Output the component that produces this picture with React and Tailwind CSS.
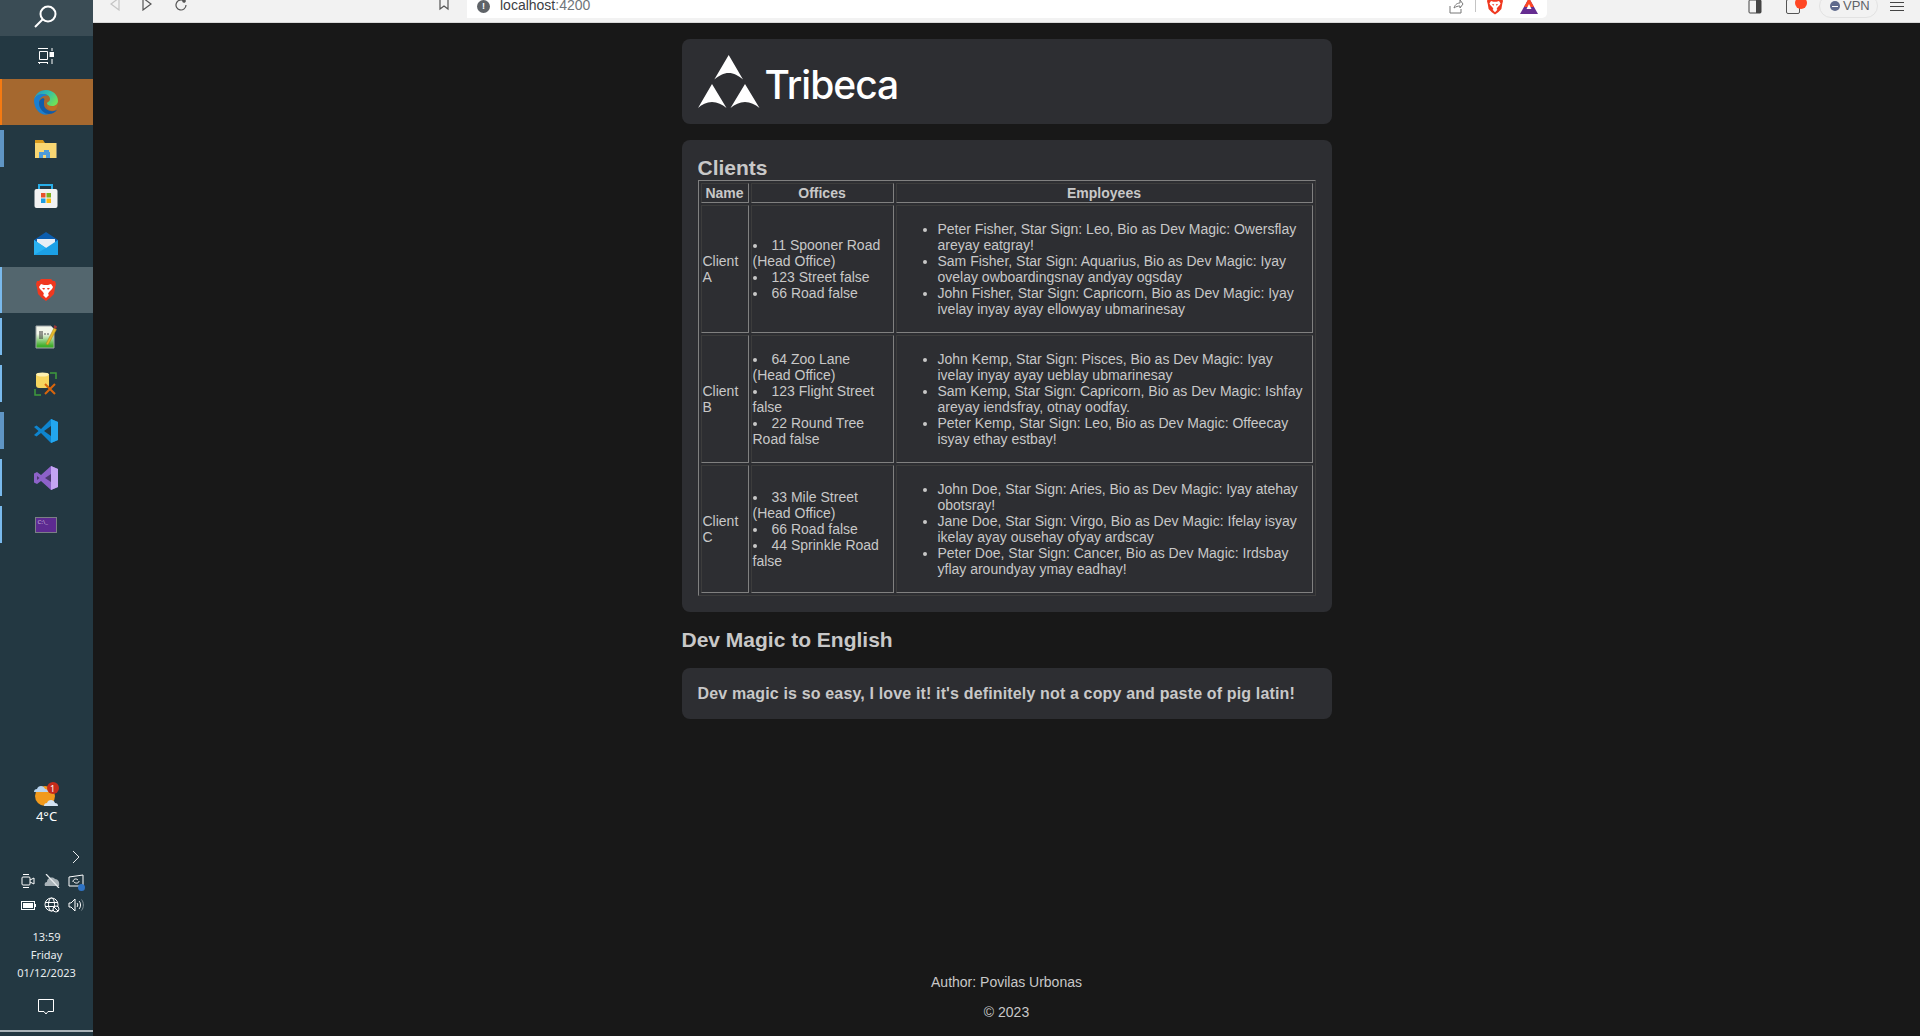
import React from "react";

const clients = [
  {
    name: "Client A",
    offices: ["11 Spooner Road (Head Office)", "123 Street false", "66 Road false"],
    employees: [
      "Peter Fisher, Star Sign: Leo, Bio as Dev Magic: Owersflay areyay eatgray!",
      "Sam Fisher, Star Sign: Aquarius, Bio as Dev Magic: Iyay ovelay owboardingsnay andyay ogsday",
      "John Fisher, Star Sign: Capricorn, Bio as Dev Magic: Iyay ivelay inyay ayay ellowyay ubmarinesay",
    ],
  },
  {
    name: "Client B",
    offices: ["64 Zoo Lane (Head Office)", "123 Flight Street false", "22 Round Tree Road false"],
    employees: [
      "John Kemp, Star Sign: Pisces, Bio as Dev Magic: Iyay ivelay inyay ayay ueblay ubmarinesay",
      "Sam Kemp, Star Sign: Capricorn, Bio as Dev Magic: Ishfay areyay iendsfray, otnay oodfay.",
      "Peter Kemp, Star Sign: Leo, Bio as Dev Magic: Offeecay isyay ethay estbay!",
    ],
  },
  {
    name: "Client C",
    offices: ["33 Mile Street (Head Office)", "66 Road false", "44 Sprinkle Road false"],
    employees: [
      "John Doe, Star Sign: Aries, Bio as Dev Magic: Iyay atehay obotsray!",
      "Jane Doe, Star Sign: Virgo, Bio as Dev Magic: Ifelay isyay ikelay ayay ousehay ofyay ardscay",
      "Peter Doe, Star Sign: Cancer, Bio as Dev Magic: Irdsbay yflay aroundyay ymay eadhay!",
    ],
  },
];

const cellBorder = "border border-t-[#3c3c3c] border-l-[#3c3c3c] border-r-[#808080] border-b-[#808080] p-px";

function Edge() {
  return (
    <svg width="24" height="25" viewBox="0 0 24 25">
      <defs>
        <linearGradient id="edgeTop" x1="0" y1="0" x2="1" y2="0.6">
          <stop offset="0" stopColor="#1c8fd0" />
          <stop offset="0.55" stopColor="#35c1a5" />
          <stop offset="1" stopColor="#6ee05a" />
        </linearGradient>
      </defs>
      <path d="M12 0C19 0 24 5 24 11c0 3-2.500 5-6 5-3 0-5-1-5-2.500 0-2 3-1.500 3-4.500 0-3-3-5-7-5C5 4 1.500 6 0 10 1 4 6 0 12 0z" fill="url(#edgeTop)" />
      <path d="M0 10c1-4 5-6 9-6 2 0 3.500 .6 5 1.600C9 5 5 8 5 13c0 5 4 10 10 11-1.200 .5-2 .7-3 .7C5 24.700 0 18 0 10z" fill="#1a7fd0" />
      <path d="M9 8c-3 1-4 3-4 5 0 6 5 11 10 11 3 0 6-1.500 8-4-2 1-4 1.500-6 1-4-.5-7-3-7-7 0-2 0-4 .5-5z" fill="#0f5cab" />
      <path d="M13 13.500c0 2 2.500 3 5 3 2.500 0 4.500-1 6-3-.5 3-1.500 5-3 6.500-2 .8-4.500 .5-6-.5-2-1.500-2.500-4-2-6z" fill="#c8701f" opacity="0.7" />
    </svg>
  );
}

function Folder() {
  return (
    <svg width="22" height="18" viewBox="0 0 22 18">
      <path d="M0 0h8l2 3h12v15H0z" fill="#d99a1c" />
      <rect x="0" y="3" width="22" height="15" fill="#f8d672" />
      <rect x="21" y="3" width="1" height="15" fill="#8f8a6a" />
      <path d="M4 18v-6h5v-2h5v2h1v6h-4v-3H8v3z" fill="#4d9ad8" />
    </svg>
  );
}

function Store() {
  return (
    <svg width="24" height="24" viewBox="0 0 24 24">
      <path d="M5 5V1h13v4" fill="none" stroke="#28aee8" strokeWidth="2" />
      <rect x="0.500" y="5" width="23" height="19" rx="2" fill="#f2f2f2" />
      <rect x="7" y="9" width="4.500" height="4.500" fill="#e8512c" />
      <rect x="12.500" y="9" width="4.500" height="4.500" fill="#7fb01f" />
      <rect x="7" y="14.500" width="4.500" height="4.500" fill="#1d9ce0" />
      <rect x="12.500" y="14.500" width="4.500" height="4.500" fill="#fab90c" />
    </svg>
  );
}

function Mail() {
  return (
    <svg width="24" height="23" viewBox="0 0 24 23">
      <path d="M0 8 12 0l12 8v2H0z" fill="#0b5dae" />
      <path d="M3 7h18v6l-9 4-9-4z" fill="#e8eef4" />
      <path d="M0 8l12 8 12-8v15H0z" fill="#1ba0e6" />
      <path d="M0 8l12 8-12 7z" fill="#29b2f2" />
    </svg>
  );
}

function BraveLion({ size = 20 }) {
  return (
    <svg width={size} height={size * 1.1} viewBox="0 0 20 22">
      <path d="M5 0h10l2 2 2 0 1 3-1 4-1 6-4 4-4 3-4-3-4-4-1-6-1-4 1-3 2 0z" fill="#f0381f" />
      <path d="M5 5l3 1h4l3-1 2 3-1 2-3 3-1 2 1 1-3 3-3-3 1-1-1-2-3-3-1-2z" fill="#fff" />
      <path d="M6 9h3l-1 2zM14 9h-3l1 2z" fill="#f0381f" />
    </svg>
  );
}

function Notepad() {
  return (
    <svg width="22" height="25" viewBox="0 0 22 25">
      <defs>
        <linearGradient id="padFill" x1="0" y1="0" x2="0" y2="1">
          <stop offset="0.35" stopColor="#f2f6ea" />
          <stop offset="0.9" stopColor="#3fae2a" />
        </linearGradient>
      </defs>
      <path d="M1 2h15l3 3v19H1z" fill="url(#padFill)" stroke="#a0a6a8" />
      <path d="M5 7v8M7 7v8" stroke="#333" strokeWidth="1" />
      <path d="M9 10h2M12 10h2" stroke="#555" strokeWidth="1" />
      <path d="M11 20 19 4l2.500 1.500L13 21z" fill="#e3b72c" stroke="#a57f14" strokeWidth="0.500" />
      <path d="M19.500 1l2.500 1.500-1 2.500-2.500-1.500z" fill="#a03838" />
    </svg>
  );
}

function DbTool() {
  return (
    <svg width="24" height="24" viewBox="0 0 24 24">
      <path d="M16 1h6v6M1 17v6h6" fill="none" stroke="#3f9a3c" strokeWidth="1.500" />
      <rect x="2" y="1" width="13" height="15" rx="3" fill="#f6d55f" />
      <ellipse cx="8.500" cy="2.500" rx="6.500" ry="2" fill="#fdf0b0" />
      <path d="M11 12l10 10M21 12 11 22" stroke="#d8650c" strokeWidth="2" />
    </svg>
  );
}

function VsCode() {
  return (
    <svg width="24" height="24" viewBox="0 0 24 24">
      <path d="M17 0 7 10 2.500 6.500 0 8l4.500 4L0 16l2.500 1.500L7 14l10 10 7-3V3z" fill="#0e85cf" />
      <path d="M17 0l7 3v18l-7 3z" fill="#23a6ee" />
      <path d="M17 7 10 12l7 5z" fill="#233842" />
    </svg>
  );
}

function VisualStudio() {
  return (
    <svg width="24" height="24" viewBox="0 0 24 24">
      <path d="M17 0 7 9 3 6 0 7.500v9L3 18l4-3 10 9 7-3V3z" fill="#8d62c9" />
      <path d="M17 0l7 3v18l-7 3z" fill="#c4a4f2" />
      <path d="M17 8 11 12l6 4zM3 10l2.500 2L3 14z" fill="#4a3a6e" />
    </svg>
  );
}

function Cmd() {
  return (
    <div className="flex h-[16px] w-[22px] border border-[#7b7f86] bg-[#5d2a91] pl-[2px] text-[6px] leading-[9px] text-[#c9b8de]">C:\_</div>
  );
}

function SidebarRow({ height, strip, children }) {
  return (
    <div className={"relative flex items-center justify-center pr-[2px] " + height}>
      {strip}
      {children}
    </div>
  );
}

const thinStrip = <span className="absolute left-0 top-[5px] bottom-[5px] w-[2px] bg-[#79b9ec]" />;
const wideStrip = <span className="absolute left-0 top-[5px] bottom-[5px] w-[4px] bg-[#5f95c4]" />;

function Sidebar() {
  return (
    <aside className="flex h-full w-[93px] shrink-0 flex-col bg-[#233842] font-['Noto_Sans',sans-serif] text-white">
      <div className="flex h-[36px] items-center justify-center bg-[#3a4c55] pb-[2px] pr-[2px]">
        <svg width="24" height="24" viewBox="0 0 24 24" fill="none" stroke="#fff" strokeWidth="2">
          <circle cx="14" cy="9" r="7.500" />
          <path d="M8.500 14.500 1 22" />
        </svg>
      </div>
      <div className="flex h-[43px] items-center justify-center pb-[4px] pr-[2px]">
        <svg width="16" height="16" viewBox="0 0 16 16" fill="none" stroke="#fff" strokeWidth="1">
          <path d="M0 .500h10M1.500 3.500h8v8h-8zM0 14.500h10M1.500 14v2M9.500 14v2" />
          <path d="M14 0v3M14 11v5" />
          <rect x="12" y="4.500" width="4" height="4" fill="#fff" />
        </svg>
      </div>
      <SidebarRow height="h-[46px] bg-[#a5682f]" strip={<span className="absolute inset-y-0 left-0 w-[2px] bg-[#f47a12]" />}><Edge /></SidebarRow>
      <SidebarRow height="h-[47px]" strip={wideStrip}><Folder /></SidebarRow>
      <SidebarRow height="h-[48px]"><Store /></SidebarRow>
      <SidebarRow height="h-[47px]"><Mail /></SidebarRow>
      <SidebarRow height="h-[46px] bg-[#53666e]" strip={<span className="absolute inset-y-0 left-0 w-[2px] bg-[#79b9ec]" />}><BraveLion /></SidebarRow>
      <SidebarRow height="h-[47px]" strip={thinStrip}><Notepad /></SidebarRow>
      <SidebarRow height="h-[47px]" strip={thinStrip}><DbTool /></SidebarRow>
      <SidebarRow height="h-[47px]" strip={wideStrip}><VsCode /></SidebarRow>
      <SidebarRow height="h-[47px]" strip={thinStrip}><VisualStudio /></SidebarRow>
      <SidebarRow height="h-[47px]" strip={thinStrip}><Cmd /></SidebarRow>

      <div className="mt-auto flex flex-col items-center pb-[4px]">
        <div className="relative h-[24px] w-[24px] -translate-x-px">
          <svg width="24" height="24" viewBox="0 0 24 24">
            <circle cx="11" cy="13" r="10" fill="#f19a1d" />
            <path d="M0 9c0-2 1-3 3-3 1-4 7-4 8 0 2 0 3 1 3 3z" fill="#b7d3ee" />
            <path d="M10 23c0-2 1-3 3-3 1-4 7-4 8 0 2 0 3 1 3 3z" fill="#d3e3f2" />
          </svg>
          <span className="absolute -right-[1px] -top-[1px] flex h-[12px] w-[12px] items-center justify-center rounded-full bg-[#c42b1c] text-[9px] leading-none text-white">1</span>
        </div>
        <div className="h-[18px] text-[13px] leading-[18px]">4°C</div>
        <div className="mt-[25px] flex h-[14px] w-full justify-end pr-[13px]">
          <svg width="8" height="14" viewBox="0 0 8 14" fill="none" stroke="#e8ecee" strokeWidth="1">
            <path d="M1 1l6 6-6 6" />
          </svg>
        </div>
        <div className="mt-[5px] grid grid-cols-[24px_24px_24px] justify-items-center self-start pl-[16px]">
          <div className="flex h-[24px] items-center">
            <svg width="14" height="16" viewBox="0 0 14 16" fill="none" stroke="#fff" strokeWidth="1">
              <rect x="1" y="4" width="8" height="8" rx="1" />
              <path d="M9 7l4-2v6l-4-2M2 1.500h6M2 14.500h6" />
            </svg>
          </div>
          <div className="flex h-[24px] items-center">
            <svg width="17" height="14" viewBox="0 0 17 14">
              <path d="M1 12c-1-2 0-4 2-4 0-4 5-6 8-3 3 0 5 3 4 7z" fill="#a9b3b8" />
              <path d="M2 0l13 14" stroke="#e8ecee" strokeWidth="1.200" />
            </svg>
          </div>
          <div className="relative flex h-[24px] items-center">
            <svg width="16" height="15" viewBox="0 0 16 15" fill="none" stroke="#fff" strokeWidth="1">
              <path d="M1 3l14-2v11H1zM5 8c0-3 3-4 5-2M11 7c0 2-3 3-5 1" />
            </svg>
            <span className="absolute bottom-[2px] -right-[1px] h-[7px] w-[7px] rounded-full bg-[#2f73c4]" />
          </div>
          <div className="flex h-[24px] items-center">
            <svg width="15" height="9" viewBox="0 0 15 9">
              <rect x="0.500" y="0.500" width="13" height="8" fill="none" stroke="#fff" />
              <rect x="2" y="2" width="10" height="5" fill="#fff" />
              <rect x="14" y="3" width="1" height="3" fill="#fff" />
            </svg>
          </div>
          <div className="flex h-[24px] items-center">
            <svg width="16" height="16" viewBox="0 0 16 16" fill="none" stroke="#fff" strokeWidth="1">
              <circle cx="7.500" cy="7.500" r="6.500" />
              <ellipse cx="7.500" cy="7.500" rx="3" ry="6.500" />
              <path d="M1 5.500h13M1 9.500h13" />
              <circle cx="12" cy="12" r="3" fill="#233842" />
              <path d="M10 10l4 4" />
            </svg>
          </div>
          <div className="flex h-[24px] items-center">
            <svg width="16" height="14" viewBox="0 0 16 14" fill="none" stroke="#fff" strokeWidth="1">
              <path d="M1 5h2l4-4v12L3 9H1z" />
              <path d="M9 5c1 1 1 3 0 4M11 3c2 2 2 6 0 8" />
              <path d="M13.500 1.500c2.500 3 2.500 8 0 11" stroke="#7d8b92" />
            </svg>
          </div>
        </div>
        <div className="mt-[11px] h-[18px] text-[11px] leading-[18px] text-[#e8ecee]">13:59</div>
        <div className="h-[18px] text-[11px] leading-[18px] text-[#e8ecee]">Friday</div>
        <div className="h-[18px] text-[11px] leading-[18px] text-[#e8ecee]">01/12/2023</div>
        <div className="mt-[15px] flex h-[20px] items-center pr-[2px]">
          <svg width="16" height="16" viewBox="0 0 16 16" fill="none" stroke="#fff" strokeWidth="1">
            <path d="M.500 .500h15v12H10l-2 2.500-2-2.500H.500z" />
          </svg>
        </div>
        <div className="mt-[13px] h-[2px] w-full bg-[#a9b3b8]" />
      </div>
    </aside>
  );
}

function TopBar() {
  return (
    <header className="relative flex h-[23px] shrink-0 items-start overflow-hidden border-b border-[#d8d8d8] bg-[#f2f2f2] font-['Liberation_Sans',sans-serif]">
      <div className="-mt-[6px] flex h-[19px] w-[374px] shrink-0 items-center pl-[17px]">
        <svg width="10" height="14" viewBox="0 0 10 14" fill="none" stroke="#c4c4c4" strokeWidth="1.200"><path d="M9 1 1 7l8 6z" /></svg>
        <svg className="ml-[22px]" width="10" height="14" viewBox="0 0 10 14" fill="none" stroke="#555" strokeWidth="1.200"><path d="M1 1l8 6-8 6z" /></svg>
        <svg className="ml-[22px]" width="13" height="14" viewBox="0 0 13 14" fill="none" stroke="#555" strokeWidth="1.200"><path d="M10 4a5 5 0 1 0 2 4" /><circle cx="10" cy="4" r="1.200" fill="#555" /></svg>
        <svg className="ml-auto mr-[18px]" width="10" height="14" viewBox="0 0 10 14" fill="none" stroke="#555" strokeWidth="1.200"><path d="M1 0v12l4-3 4 3V0" /></svg>
      </div>
      <div className="-mt-[6px] flex h-[24px] w-[1080px] shrink-0 items-center rounded-br-[5px] bg-white pl-[10px]">
        <span className="flex h-[13px] w-[13px] items-center justify-center rounded-full bg-[#5f6368] text-[9px] font-bold leading-none text-white">!</span>
        <span className="ml-[10px] -translate-y-px text-[14px] text-[#3c4043]">localhost<span className="text-[#70757a]">:4200</span></span>
        <svg className="ml-auto" width="15" height="15" viewBox="0 0 15 15" fill="none" stroke="#777" strokeWidth="1"><path d="M1 7v7h11v-4M5 9c1-4 4-5 6-5V1l3 4-3 4V7c-2 0-4 .5-6 2z" /></svg>
        <span className="ml-[11px] h-[12px] w-px bg-[#c4c4c4]" />
        <span className="ml-[11px]"><BraveLion size={16} /></span>
        <svg className="ml-[17px] mr-[9px]" width="18" height="16" viewBox="0 0 18 16"><path d="M9 0l9 16H0z" fill="#662d91" /><path d="M9 0l5 9H4z" fill="#ff4724" /><path d="M9 6l2.500 5h-5z" fill="#fff" /></svg>
      </div>
      <div className="-mt-[6px] flex h-[24px] flex-1 items-center">
        <svg className="ml-[201px]" width="14" height="15" viewBox="0 0 14 15"><rect x="1" y="1" width="12" height="13" rx="1" fill="none" stroke="#444" /><rect x="8" y="1" width="5" height="13" fill="#444" /></svg>
        <div className="relative ml-[24px] h-[15px] w-[14px] rounded-[2px] border border-[#555]">
          <span className="absolute -right-[8px] -top-[3px] h-[12px] w-[12px] rounded-full bg-[#ff4724]" />
        </div>
        <div className="ml-[19px] flex h-[24px] w-[59px] items-center rounded-full border border-[#e2e2e2] pl-[10px] text-[13px] text-[#5f6368]">
          <span className="mr-[3px] flex h-[10px] w-[10px] items-center justify-center rounded-full bg-[#5f6a8c]"><span className="h-px w-[6px] bg-white" /></span>VPN
        </div>
        <div className="ml-[12px] flex w-[14px] flex-col gap-[3px]">
          <span className="h-px bg-[#444]" />
          <span className="h-px bg-[#444]" />
          <span className="h-px bg-[#444]" />
        </div>
      </div>
    </header>
  );
}

function Logo() {
  return (
    <svg width="62" height="54" viewBox="0 0 62 54" fill="#fff">
      <path d="M30.700 0 45 24.500C40 20.500 36 18 30.700 18S21.500 20.500 16.300 24.500z" />
      <path d="M14 29 28.500 53C24 49.500 19.500 47 14 47S4 49.500 0 53z" />
      <path d="M47 29 61.500 53C57 49.500 52.500 47 47 47S37 49.500 32.500 53z" />
    </svg>
  );
}

export default function App() {
  return (
    <div className="flex h-[1036px] w-[1920px] overflow-hidden bg-[#181818] font-['Liberation_Sans',Arial,sans-serif] text-[14px] text-[#c8c8c8]">
      <Sidebar />
      <div className="flex min-w-0 flex-1 flex-col">
        <TopBar />
        <main className="flex flex-1 flex-col items-center pt-[16px]">
          <div className="w-[650px]">
            <div className="flex h-[85px] items-center rounded-[8px] bg-[#2d2e32] pl-[16px] pt-[1px]">
              <Logo />
              <span className="ml-[5px] mt-[5px] font-['Inter',sans-serif] text-[39px] font-medium leading-none tracking-[-1px] text-white">Tribeca</span>
            </div>

            <section className="mt-[16px] rounded-[8px] bg-[#2d2e32] p-[16px]">
              <h2 className="h-[24px] text-[21px] font-bold leading-[24px]">Clients</h2>
              <table className="w-[618px] table-fixed border-separate border-spacing-[2px] border border-t-[#808080] border-l-[#808080] border-r-[#3c3c3c] border-b-[#3c3c3c] leading-[16px]">
                <thead>
                  <tr>
                    <th className={cellBorder + " w-[48px] font-bold"}>Name</th>
                    <th className={cellBorder + " w-[143px] font-bold"}>Offices</th>
                    <th className={cellBorder + " font-bold"}>Employees</th>
                  </tr>
                </thead>
                <tbody>
                  {clients.map((client) => (
                    <tr key={client.name}>
                      <td className={cellBorder}>{client.name}</td>
                      <td className={cellBorder}>
                        <ul className="list-inside list-disc">
                          {client.offices.map((office) => (
                            <li key={office}>{office}</li>
                          ))}
                        </ul>
                      </td>
                      <td className={cellBorder}>
                        <ul className="my-[14px] list-disc pl-10">
                          {client.employees.map((employee) => (
                            <li key={employee}>{employee}</li>
                          ))}
                        </ul>
                      </td>
                    </tr>
                  ))}
                </tbody>
              </table>
            </section>

            <h2 className="mb-[16px] mt-[16px] text-[21px] font-bold leading-[24px]">Dev Magic to English</h2>
            <div className="rounded-[8px] bg-[#2d2e32] p-[16px] text-[16px] font-bold leading-[19px] tracking-[0.15px]">
              Dev magic is so easy, I love it! it's definitely not a copy and paste of pig latin!
            </div>
          </div>

          <footer className="mb-[16px] mt-auto flex flex-col items-center">
            <p className="leading-[16px]">Author: Povilas Urbonas</p>
            <p className="mt-[14px] leading-[16px]">© 2023</p>
          </footer>
        </main>
      </div>
    </div>
  );
}
